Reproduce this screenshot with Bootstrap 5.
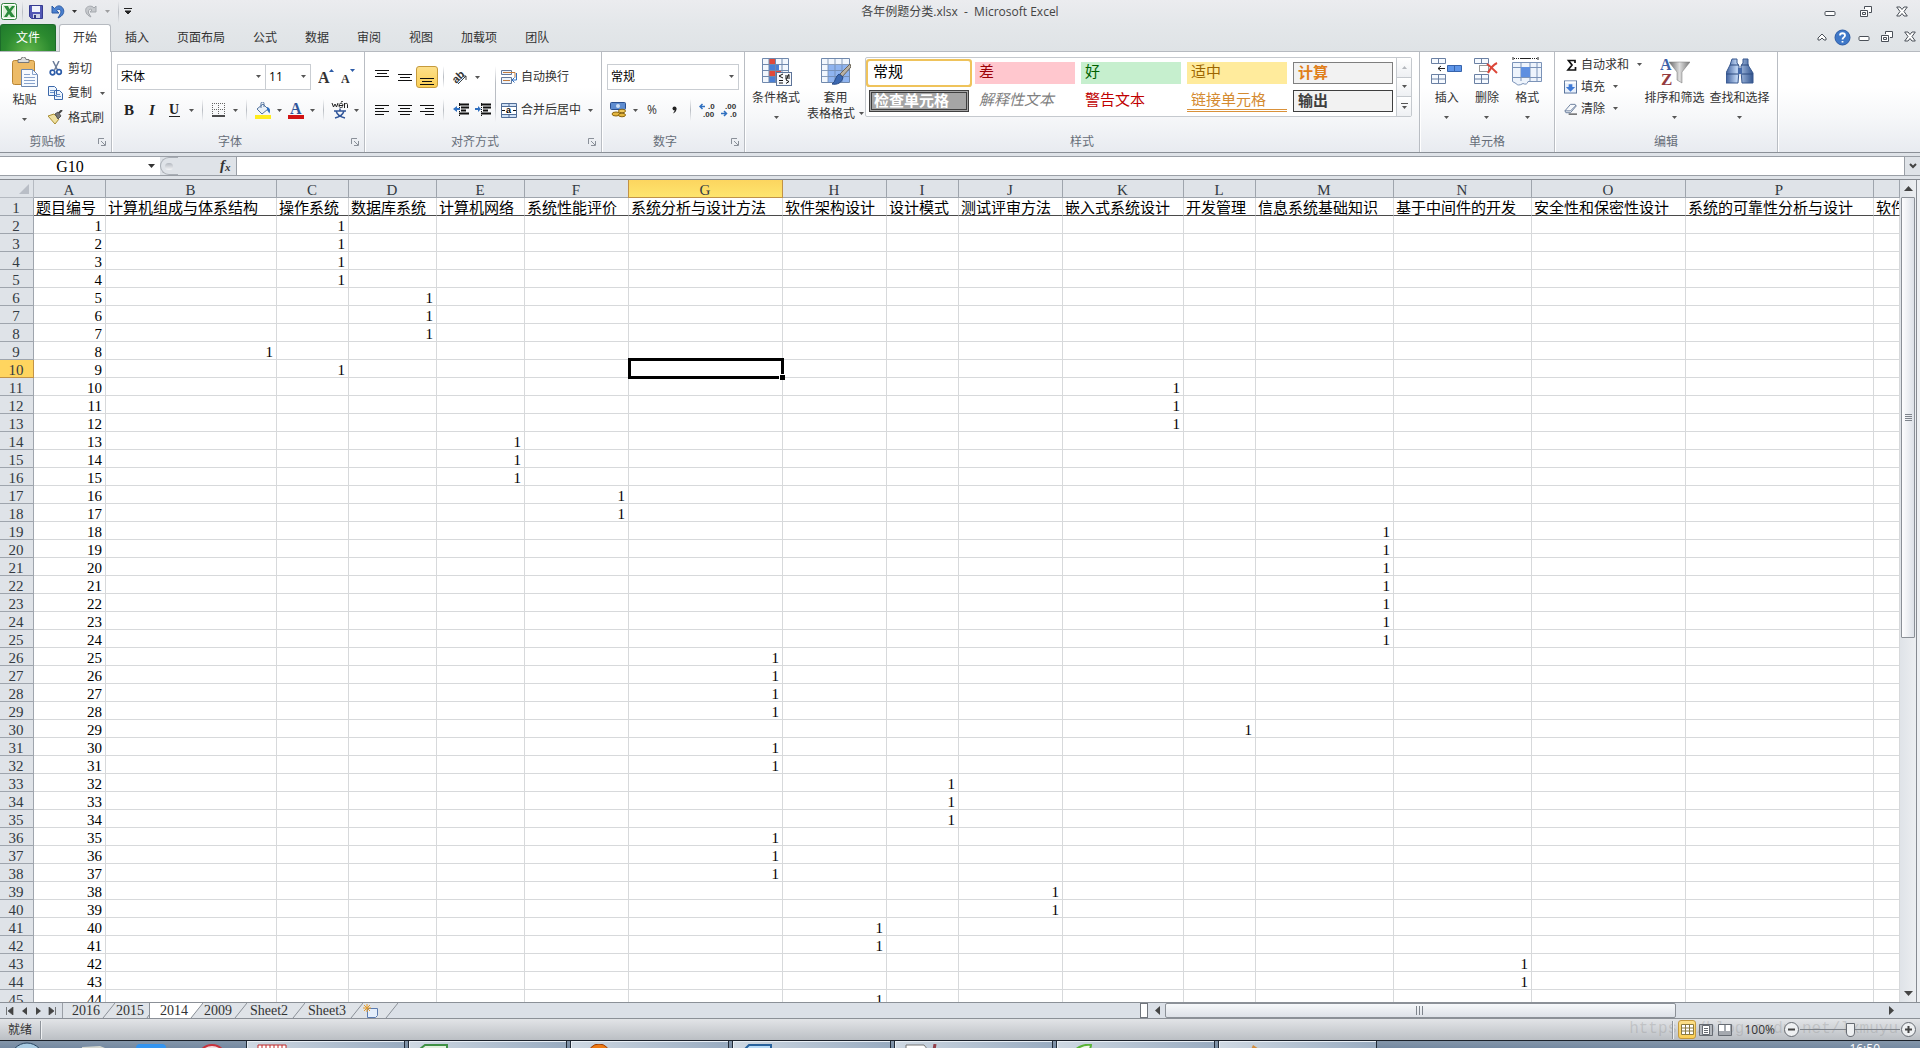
<!DOCTYPE html>
<html lang="zh-CN">
<head>
<meta charset="utf-8">
<meta name="viewport" content="width=device-width, initial-scale=1">
<title>各年例题分类.xlsx - Microsoft Excel</title>
<link href="https://cdn.jsdelivr.net/npm/bootstrap@5.3.0/dist/css/bootstrap.min.css" rel="stylesheet">
<style>
body{height:100vh;overflow:hidden;font:12px/16px "Open Sans","Noto Sans CJK SC",sans-serif;color:#333;background:#dfe3e8}
button{color:inherit}
svg{display:block;flex:none}
.rb{border:0;padding:0;background:none;font-size:12px;line-height:16px;border-radius:3px;display:flex;align-items:center;justify-content:center;white-space:nowrap;color:#333;flex:none}
.rb:hover{background:#fdeeb3}
.titlebar{height:24px;background:linear-gradient(#ebecef,#e4e7ea)}
.titlebar .doc-name{left:0;right:0;top:4px;pointer-events:none;color:#444}
.tabstrip{height:27px;background:linear-gradient(#e4e7ea,#dfe3e6)}
.tabstrip .nav-link{padding:0 14px;font-size:12px;line-height:27px;color:#333;border-radius:0}
.tabstrip .file-tab{width:56px;padding:0;color:#fff;text-align:center;background:radial-gradient(ellipse at 50% 100%,#5fb548,#2b8a2f 60%,#1f7a2c);border:1px solid #1c6b2a;border-bottom:0;border-radius:3px 3px 0 0;line-height:26px;margin-right:3px}
.tabstrip .current{background:#fff;border:1px solid #b6bac0;border-bottom:0;border-radius:3px 3px 0 0;padding:0 13px;height:28px;position:relative;z-index:2;line-height:26px}
.doc-ctl{gap:7px}
.ribbon{height:103px;border-top:1px solid #b6bac0;border-bottom:1px solid #8b9097;background:linear-gradient(#fff 35%,#f6f7f9 65%,#e8ebf0);position:relative}
.rgroup{border-right:1px solid #b9bdc3;box-shadow:1px 0 0 #fff;padding:5px 5px 1px;position:relative}
.rgroup .cap{height:18px;line-height:18px;color:#666d78;text-align:center}
.launch{right:5px;bottom:6px;width:8px;height:8px}
.g-clip{width:112px}.g-font{width:253px}.g-align{width:237px}.g-num{width:143px}.g-style{width:675px}.g-cell{width:135px}.g-edit{width:223px}
.trow{height:33px}
.trow-combo{padding-top:7px;margin-bottom:4px}
.align-body{padding-top:4px}
.w22{width:22px;height:22px}.w11{width:11px;height:22px}.w23{width:23px;height:22px}
.on{background:linear-gradient(#fde08a,#fbcf55);border:1px solid #c59a3c}
.vsep{width:11px;height:22px;background:linear-gradient(#0000,#b9bdc3,#0000) 50%/1px 100% no-repeat;flex:none}
.vtall{width:10px;height:56px;background:linear-gradient(#0000,#b9bdc3 30%,#b9bdc3 70%,#0000) 50%/1px 100% no-repeat}
.combo{height:26px;border:1px solid #c9cdd2;background:#fff}
.combo select{appearance:none;border:0;outline:0;background:none;padding:0 3px;font-size:12px;line-height:16px;color:#000;min-width:0}
.big{flex-direction:column;justify-content:flex-start;line-height:16px}
.big svg{margin-bottom:4px}
.big svg:last-child{margin-top:10px}
.big span svg:last-child{margin:0}
.cond{width:52px}.tablefmt{width:59px}
.small-list{height:69px}
.gallery{border:1px solid #c5c9ce;border-radius:2px;height:60px;background:#fff}
.gal-grid{display:grid;grid-template-columns:repeat(5,100px);grid-auto-rows:22px;gap:6px;padding:4px 3px 0 3px}
.sty{border:0;padding:0 4px;text-align:left;font:15px/17px "Noto Sans CJK SC",sans-serif;white-space:nowrap;background:#fff;display:flex;align-items:flex-start}
.s-normal{color:#000;box-shadow:0 0 0 1px #fff,0 0 0 3px #efc35b;border-radius:1px}
.s-bad{background:#ffc7ce;color:#9c0006}.s-good{background:#c6efce;color:#006100}.s-mid{background:#ffeb9c;color:#9c6500}
.s-calc{background:#f2f2f2;color:#e07f1a;border:1px solid #7f7f7f;font-weight:700}
.s-check{background:#a5a5a5;color:#fff;border:3px double #3f3f3f;font-weight:700;line-height:14px;padding:0 2px}
.s-exp{color:#7f7f7f;font-style:italic}.s-warn{color:#c00000}
.s-link{color:#d48a30;border-bottom:3px double #d9913a}
.s-out{background:#f2f2f2;color:#3f3f3f;border:1px solid #3f3f3f;font-weight:700}
.gal-nav{width:15px;border-left:1px solid #c5c9ce}
.gal-nav button{flex:1;border:0;border-bottom:1px solid #c5c9ce;border-radius:0;background:linear-gradient(#fff,#eef0f3)}
.gal-nav button:last-child{border-bottom:0}
.edit-list{width:80px;gap:6px}
.fxbar{height:20px;margin:3px 0;border-top:1px solid #9a9fa6;border-bottom:1px solid #9a9fa6;background:#fff}
.fxbar input{border:0;outline:0;background:none;padding:2px 0 0;font:16px/16px "Liberation Serif","Noto Sans CJK SC",serif;color:#000}
.namebox{width:160px}.namebox input{width:140px;text-align:center}
.fxtools{width:77px;background:#dfe3e8;border-right:1px solid #9a9fa6}
.fxknob{width:18px;height:18px;border:1px solid #a9aeb5;border-radius:9px 0 0 9px;border-right:0}
.fxknob i{display:block;width:8px;height:7px;border-radius:4px;margin:5px 4px;background:linear-gradient(#b4b9c0,#f4f5f7)}
.fxmore{width:16px;border-radius:0;border-left:1px solid #9a9fa6;background:#dfe3e8}
.sheet-area{border-top:1px solid #868a91;background:#fff;min-height:0}
.gridwrap{flex:1 1 0;overflow:hidden;min-width:0}
.cells{table-layout:fixed;width:100%;border-collapse:separate;border-spacing:0;font:15px/13px "Liberation Serif","Noto Sans CJK SC",serif;color:#000}
.cells th,.cells td{height:18px;padding:4px 3px 0 2px;border-right:1px solid #d7d9db;border-bottom:1px solid #d7d9db;white-space:nowrap;overflow:hidden;font-weight:400;text-align:right;position:relative}
.cells thead th,.cells tbody th{background:#dfe3e8;color:#333a42;text-align:center;border-color:#9fa5ad}
.cells thead th:first-child{border-color:#b5bac1}
.cells .top-row td{text-align:left;border-bottom-color:#4a4a4a;padding-right:0}
.cells thead .hot{background:linear-gradient(#fcd55f,#fee56e);border-color:#c19247;box-shadow:-1px 0 0 #c19247;overflow:visible}
.cells tbody .hot{background:#ffd55f;border-color:#c19247}
.cells .picked{overflow:visible}
.cursor{position:absolute;inset:-2px -2px -2px -1px;border:3px solid #000;z-index:2}
.cursor::after{content:"";position:absolute;right:-4px;bottom:-4px;width:6px;height:6px;background:#000;border:solid #fff;border-width:1px 0 0 1px}
.corner{position:absolute;right:4px;bottom:3px}
.vscroll{width:16px;flex:none;background:linear-gradient(90deg,#dfe3e8,#eceef1)}
.vscroll .track{flex:1}
.thumb-v{height:56%;margin:0 1px;border:1px solid #8b9097;background:linear-gradient(90deg,#fdfdfe,#dde1e8);border-radius:1px}
.edge{width:4px;flex:none;border-left:1px solid #868a91;background:#eef0f3}
.sheetbar{height:17px;border-top:1px solid #8b9097;border-bottom:1px solid #8b9097;background:#dbe0e7}
.navs{width:63px;padding:0 3px;border-right:1px solid #9a9fa6}
.navs .rb{width:14px}
.stab{border:0;padding:0;background:#dfe3e8;width:30px;font:14px/15px "Liberation Serif",serif;color:#333;text-align:center}
.stab.wide{width:44px}
.stab.live{background:#fff}
.first-gap{width:8px;background:#dfe3e8}
.hscroll{flex:0 0 40.6%}
.hs-end{width:22px}
.split{width:8px;margin:0 1px 0 0;border:1px solid #70757c;background:#fff}
.thumb-h{width:71%;border:1px solid #8b9097;border-radius:2px;background:linear-gradient(#f6f8fa,#dde1e8)}
.grip-h{width:9px;height:9px;background:repeating-linear-gradient(90deg,#7e848c 0 1px,#0000 1px 3px)}
.grip-v{width:7px;height:7px;background:repeating-linear-gradient(#7e848c 0 1px,#0000 1px 2px)}
.statusbar{height:21px;background:linear-gradient(#e2e4e7,#bbbfc4);position:relative}
.sdiv{width:2px;height:18px;border-left:1px solid #8f949b;background:#eef0f2}
.wmark{position:absolute;right:22px;top:1px;font:16px/18px "Liberation Mono",monospace;color:#7d7d7d40;pointer-events:none}
.zoom-tools{padding-right:3px}
.views{gap:1px;margin-right:2px}
.views .rb{width:18px;height:19px}
.zoomer{appearance:none;width:100px;height:19px;margin:0;background:linear-gradient(#7c8188,#7c8188) 50%/100% 1px no-repeat}
.zoomer::-webkit-slider-thumb{appearance:none;width:9px;height:14px;background:#eef0f2;border:1px solid #666b72;border-radius:1px 1px 5px 5px}
.taskbar{height:8px;overflow:hidden;border-top:1px solid #1a2029;background:linear-gradient(#8496aa,#7489a1)}
.tasks{padding-left:44px;gap:3px}
.task{width:159px;height:30px;border:1px solid #202a36;border-top:0;border-radius:0;padding:3px 10px;background:linear-gradient(90deg,#cfd9e3,#98abc0);box-shadow:inset 1px 1px 0 #e9eff5}
.launchers{width:202px}
.clock{color:#fff;font-size:12px;line-height:16px}
</style>
</head>
<body class="d-flex flex-column">

<svg width="0" height="0" class="position-absolute" aria-hidden="true">
<defs>
<linearGradient id="bino" x2="1" y2="0"><stop stop-color="#3d5f9c"/><stop offset=".4" stop-color="#bdd3f2"/><stop offset="1" stop-color="#33558f"/></linearGradient>
<linearGradient id="fun" x2="1" y2="0"><stop stop-color="#666"/><stop offset=".5" stop-color="#ddd"/><stop offset="1" stop-color="#777"/></linearGradient>
<symbol id="dn" viewBox="0 0 5 3"><path d="M0 0h5L2.500 3z" fill="#555"/></symbol>
<symbol id="dnk" viewBox="0 0 7 4"><path d="M0 0h7L3.500 4z" fill="#333"/></symbol>
<symbol id="min" viewBox="0 0 12 12"><rect x="1" y="5.500" width="10" height="4" rx="1" fill="#fff" stroke="#4a5058"/></symbol>
<symbol id="res" viewBox="0 0 12 12"><path d="M4.500 3V.500h7v6H9M.500 4.500h7v6h-7zM2.500 6.500h3v2h-3z" fill="#fff" stroke="#4a5058"/></symbol>
<symbol id="cls" viewBox="0 0 12 12"><path d="M.700 1h3.300l2 2.500L8 1h3.300L8 5.500l3.300 4.500H8L6 7.500 4 10H.700L4 5.500z" fill="#fff" stroke="#4a5058"/></symbol>
<symbol id="lau" viewBox="0 0 8 8"><path d="M.500 6V.500H6M7.500 3v4.500H3M3 3l4 4" fill="none" stroke="#8a9099"/></symbol>
<symbol id="al" viewBox="0 0 14 12"><path d="M0 .500h14M0 3.500h9M0 6.500h14M0 9.500h9" stroke="#111"/></symbol>
<symbol id="ac" viewBox="0 0 14 12"><path d="M0 .500h14M2 3.500h10M0 6.500h14M2 9.500h10" stroke="#111"/></symbol>
<symbol id="ar" viewBox="0 0 14 12"><path d="M0 .500h14M5 3.500h9M0 6.500h14M5 9.500h9" stroke="#111"/></symbol>
<symbol id="va" viewBox="0 0 14 7"><path d="M0 .500h14M2 3.500h10M0 6.500h14" stroke="#111"/></symbol>
</defs>
</svg>

<header class="titlebar d-flex align-items-center position-relative">
  <button class="rb" aria-label="Excel"><svg width="17" height="17"><rect x="1.500" y=".500" width="15" height="16" rx="2" fill="#fff" stroke="#2d7d3a"/><rect x="3" y="2" width="12" height="13" fill="#dcefd8"/><path d="M4 3h4l1.500 3L12 3h3l-4 5.500 4 5.500h-4l-2-3-2 3H4l3.500-5.500z" fill="#2c8b3c"/></svg></button>
  <span class="vsep"></span>
  <button class="rb me-2" aria-label="保存"><svg width="15" height="14"><path d="M1.500.500h13v13h-11l-2-2z" fill="#5157b5" stroke="#363b90"/><path d="M4 1h8v6H4z" fill="#f0f3fb"/><path d="M5 9h7v4H5z" fill="#cfd4e8"/><path d="M6 10h2v3H6z" fill="#333a80"/></svg></button>
  <button class="rb" aria-label="撤消"><svg width="14" height="14"><path d="M1 1v7h7L5.500 5.500C8 3 11 5 9.500 8.500L7 13c5-2 7-6 5-9.500S6 0 3.500 3.500z" fill="#4a80cf" stroke="#2c5ba5"/></svg></button>
  <button class="rb w11 ms-1" aria-label="撤消列表"><svg width="5" height="3"><use href="#dnk"/></svg></button>
  <button class="rb ms-1" aria-label="恢复"><svg width="14" height="14"><path d="M12 1v6H6l2-2C6 3 4 5 4.500 8L7 12C2 10 1 6 2 3.500S8 0 10 3z" fill="#c6c9cd" stroke="#a4a8ad"/></svg></button>
  <button class="rb w11 ms-1" aria-label="恢复列表"><svg width="5" height="3" opacity=".5"><use href="#dn"/></svg></button>
  <span class="vsep"></span>
  <button class="rb" aria-label="自定义快速访问工具栏"><svg width="8" height="7"><path d="M0 .500h8M1 3h6L4 6z" stroke="#222" fill="#222"/></svg></button>
  <div class="doc-name position-absolute text-center">各年例题分类.xlsx&nbsp; -&nbsp; Microsoft Excel</div>
  <div class="ms-auto d-flex align-items-center pe-2 me-1">
    <button class="rb me-4" aria-label="最小化"><svg width="12" height="12"><use href="#min"/></svg></button>
    <button class="rb me-4" aria-label="还原"><svg width="12" height="12"><use href="#res"/></svg></button>
    <button class="rb" aria-label="关闭"><svg width="12" height="12"><use href="#cls"/></svg></button>
  </div>
</header>

<nav class="tabstrip nav flex-nowrap">
  <a class="nav-link file-tab" href="#">文件</a>
  <a class="nav-link current" href="#">开始</a>
  <a class="nav-link" href="#">插入</a>
  <a class="nav-link" href="#">页面布局</a>
  <a class="nav-link" href="#">公式</a>
  <a class="nav-link" href="#">数据</a>
  <a class="nav-link" href="#">审阅</a>
  <a class="nav-link" href="#">视图</a>
  <a class="nav-link" href="#">加载项</a>
  <a class="nav-link" href="#">团队</a>
  <div class="doc-ctl ms-auto d-flex align-items-center pe-1">
    <button class="rb" aria-label="功能区最小化"><svg width="10" height="8"><path d="M1 5l4-4 4 4v2H7L5 5 3 7H1z" fill="#fff" stroke="#4a5058"/></svg></button>
    <button class="rb" aria-label="帮助"><svg width="17" height="17"><circle cx="8.500" cy="8.500" r="7.500" fill="#3f78c8" stroke="#2c5ba5"/><path d="M6 6.500c0-3 5-3 5 0 0 2-2.500 1.800-2.500 4M8.500 12v1.500" stroke="#fff" stroke-width="1.800" fill="none"/></svg></button>
    <button class="rb" aria-label="窗口最小化"><svg width="12" height="12"><use href="#min"/></svg></button>
    <button class="rb ms-1" aria-label="窗口还原"><svg width="12" height="12"><use href="#res"/></svg></button>
    <button class="rb ms-1" aria-label="关闭窗口"><svg width="12" height="12"><use href="#cls"/></svg></button>
  </div>
</nav>

<section class="ribbon d-flex">
  <div class="rgroup g-clip d-flex flex-column justify-content-between">
    <div class="d-flex">
      <button class="rb big me-1" style="width:39px"><svg width="27" height="31"><rect x="1.500" y="3.500" width="22" height="24" rx="2" fill="#edbb67" stroke="#b98532"/><path d="M7 5.500h11v-3h-3a2.500 2.500 0 0 0-5 0H7z" fill="#ddd" stroke="#777"/><path d="M10.500 12.500h11l5 5v12h-16z" fill="#f6faff" stroke="#6d87ae"/><path d="M21.500 12.500v5h5M13 17.500h6M13 20.500h11M13 23.500h11M13 26.500h11" stroke="#88a3cc" fill="none"/></svg>粘贴<svg width="5" height="3"><use href="#dn"/></svg></button>
      <div class="small-list d-flex flex-column justify-content-between align-items-start">
        <button class="rb gap-1 mt-1"><svg width="16" height="15"><path d="M5 0l4.500 9M11 0L6.500 9" stroke="#6b7c99" stroke-width="1.500"/><circle cx="4.500" cy="11.500" r="2.300" fill="none" stroke="#2d5ca8" stroke-width="1.700"/><circle cx="11" cy="11" r="2.300" fill="none" stroke="#2d5ca8" stroke-width="1.700"/></svg>剪切</button>
        <button class="rb gap-1"><svg width="16" height="14"><path d="M.500.500h6l2 2v7h-8zM6.500 4.500h5l3 3v6h-8z" fill="#eef5fd" stroke="#3c68aa"/><path d="M2 4.500h4M2 6.500h4M8 8.500h4M8 10.500h5" stroke="#6992cc"/></svg>复制<svg class="ms-1" width="5" height="3"><use href="#dn"/></svg></button>
        <button class="rb gap-1"><svg width="16" height="15"><path d="M0 6l6-2 5 5-4 5z" fill="#efe0a0" stroke="#a98e33"/><path d="M7 4l3-2 3 4-3 3z" fill="#777" stroke="#555"/><path d="M11 3l3-3" stroke="#444" stroke-width="2"/></svg>格式刷</button>
      </div>
    </div>
    <div class="cap me-3">剪贴板</div><svg class="launch position-absolute"><use href="#lau"/></svg>
  </div>

  <div class="rgroup g-font d-flex flex-column justify-content-between">
    <div>
      <div class="trow trow-combo d-flex align-items-center">
        <div class="combo d-flex align-items-center pe-1" style="width:153px"><select class="flex-fill" aria-label="字体"><option>宋体</option></select><svg width="5" height="3"><use href="#dn"/></svg></div>
        <div class="combo d-flex align-items-center pe-1 border-start-0" style="width:46px"><select class="flex-fill" aria-label="字号"><option>11</option></select><svg width="5" height="3"><use href="#dn"/></svg></div>
        <button class="rb w22 ms-1" aria-label="增大字号"><svg width="16" height="16"><text x="0" y="14" font-family="Liberation Serif" font-size="16" font-weight="700" fill="#333">A</text><path d="M11 3h5l-2.500-3z" fill="#2d5ca8"/></svg></button>
        <button class="rb w22" aria-label="减小字号"><svg width="14" height="16"><text x="0" y="14" font-family="Liberation Serif" font-size="12" font-weight="700" fill="#333">A</text><path d="M9 0h5l-2.500 3z" fill="#2d5ca8"/></svg></button>
      </div>
      <div class="trow d-flex align-items-center">
        <button class="rb w23" aria-label="加粗"><svg width="12" height="14"><text x="1" y="12" font-family="Liberation Serif" font-size="15" font-weight="700" fill="#222">B</text></svg></button>
        <button class="rb w23" aria-label="倾斜"><svg width="12" height="14"><text x="3" y="12" font-family="Liberation Serif" font-size="15" font-weight="700" font-style="italic" fill="#222">I</text></svg></button>
        <button class="rb w23" aria-label="下划线"><svg width="12" height="15"><text x="0" y="11" font-family="Liberation Serif" font-size="14" font-weight="700" fill="#222">U</text><path d="M0 13.500h11" stroke="#222"/></svg></button>
        <button class="rb w11" aria-label="下划线选项"><svg width="5" height="3"><use href="#dn"/></svg></button><span class="vsep"></span>
        <button class="rb w22" aria-label="边框"><svg width="14" height="14"><path d="M0 .500h13M0 6.500h13M.500 0v12M6.500 0v12M12.500 0v12" stroke="#666" stroke-dasharray="1 1"/><path d="M0 13h13" stroke="#111" stroke-width="1.500"/></svg></button>
        <button class="rb w11" aria-label="边框选项"><svg width="5" height="3"><use href="#dn"/></svg></button><span class="vsep"></span>
        <button class="rb w22" aria-label="填充颜色"><svg width="16" height="17"><path d="M2 7l6-5 5 5-6 5z" fill="#e9f0f8" stroke="#54749f"/><path d="M6 6V1.500a1.500 1.500 0 0 1 3 0V5" fill="none" stroke="#54749f"/><path d="M12 5c4 1 3 5 2.500 6.500L12 8z" fill="#2f6fc0"/><path d="M0 13h16v4H0z" fill="#ffec1f"/></svg></button>
        <button class="rb w11" aria-label="填充颜色选项"><svg width="5" height="3"><use href="#dn"/></svg></button>
        <button class="rb w22" aria-label="字体颜色"><svg width="16" height="17"><text x="2" y="12" font-family="Liberation Serif" font-size="16" font-weight="700" fill="#31569a">A</text><path d="M0 13h16v4H0z" fill="#d11313"/></svg></button>
        <button class="rb w11" aria-label="字体颜色选项"><svg width="5" height="3"><use href="#dn"/></svg></button><span class="vsep"></span>
        <button class="rb w22" aria-label="拼音"><svg width="18" height="18"><path d="M1 2l1.500 4L4 3l1.500 3L7 2M8 4.500h4C12 1.500 8 1.500 8 4.500s3 2 4 1M10 1l2-1M13.500 7V2m0 1.500c1-1.500 3-1.500 3 0V7" fill="none" stroke="#222"/><path d="M3 10h12M9 7.500V10M5 10c1 3.500 5 6 9 7M13 10c-1 3.500-5 6-9 7" fill="none" stroke="#31569a" stroke-width="1.500"/></svg></button>
        <button class="rb w11" aria-label="拼音选项"><svg width="5" height="3"><use href="#dn"/></svg></button>
      </div>
    </div>
    <div class="cap me-3">字体</div><svg class="launch position-absolute"><use href="#lau"/></svg>
  </div>

  <div class="rgroup g-align d-flex flex-column justify-content-between">
    <div class="align-body d-flex align-items-center">
      <div>
        <div class="trow d-flex align-items-center">
          <button class="rb w23" aria-label="顶端对齐"><svg width="14" height="14" viewBox="0 0 14 14"><use href="#va" width="14" height="7"/></svg></button>
          <button class="rb w23" aria-label="垂直居中"><svg width="14" height="7"><use href="#va"/></svg></button>
          <button class="rb w22 on pt-2" aria-label="底端对齐"><svg width="14" height="7"><use href="#va"/></svg></button>
          <span class="vsep"></span>
          <button class="rb w23" aria-label="方向"><svg width="17" height="16"><g transform="rotate(-45 7 8)"><text x="0" y="11" font-family="Liberation Sans" font-size="11" font-weight="700" fill="#333">ab</text></g><path d="M6 15l8-8m-4 0h4v4" stroke="#444" fill="none"/></svg></button>
          <button class="rb w11" aria-label="方向选项"><svg width="5" height="3"><use href="#dn"/></svg></button>
        </div>
        <div class="trow d-flex align-items-center">
          <button class="rb w23" aria-label="左对齐"><svg width="14" height="11" viewBox="0 0 14 11"><use href="#al" width="14" height="12"/></svg></button>
          <button class="rb w23" aria-label="居中"><svg width="14" height="11" viewBox="0 0 14 11"><use href="#ac" width="14" height="12"/></svg></button>
          <button class="rb w22" aria-label="右对齐"><svg width="14" height="11" viewBox="0 0 14 11"><use href="#ar" width="14" height="12"/></svg></button>
          <span class="vsep"></span>
          <button class="rb w23" aria-label="减少缩进量"><svg width="16" height="14"><path d="M6 1.500h10M8 4.500h8M8 7.500h5M6 10.500h10" stroke="#111" stroke-width="2"/><path d="M6.500 0v14" stroke="#111" stroke-dasharray="1 1"/><path d="M0 6l4-3v2h3v2H4v2z" fill="#2f6fc0"/></svg></button>
          <button class="rb w22" aria-label="增加缩进量"><svg width="16" height="14"><path d="M6 1.500h10M8 4.500h8M8 7.500h5M6 10.500h10" stroke="#111" stroke-width="2"/><path d="M6.500 0v14" stroke="#111" stroke-dasharray="1 1"/><path d="M6 6L3 3v2H0v2h3v2z" fill="#2f6fc0"/></svg></button>
        </div>
      </div>
      <span class="vtall"></span>
      <div class="ps-1">
        <div class="trow d-flex align-items-center"><button class="rb gap-1"><svg width="16" height="15"><path d="M.500.500h10v4H.500zM.500 7.500h10v6H.500z" fill="#eef4fb" stroke="#64789a"/><path d="M2 2.500h12v5M2 10.500h7" stroke="#c07a3e" fill="none"/><path d="M15.500 3v7h-4m2-2.500L11 10l2.500 2.500" fill="none" stroke="#2f6fc0"/></svg>自动换行</button></div>
        <div class="trow d-flex align-items-center"><button class="rb gap-1"><svg width="16" height="15"><path d="M.500.500h15v14H.500z" fill="#cfe0f5" stroke="#506d97"/><path d="M.500 3.500h15M.500 11.500h15M8 0v4M8 11v4" stroke="#506d97"/><path d="M1 4h14v7H1z" fill="#fff"/><text x="5" y="10" font-family="Liberation Sans" font-weight="700" font-size="9">a</text><path d="M1 7.500h3M12 7.500h3" stroke="#111"/></svg>合并后居中</button><button class="rb w11 ms-1" aria-label="合并选项"><svg width="5" height="3"><use href="#dn"/></svg></button></div>
      </div>
    </div>
    <div class="cap me-3">对齐方式</div><svg class="launch position-absolute"><use href="#lau"/></svg>
  </div>

  <div class="rgroup g-num d-flex flex-column justify-content-between">
    <div>
      <div class="trow trow-combo d-flex align-items-center">
        <div class="combo d-flex align-items-center pe-1 w-100"><select class="flex-fill" aria-label="数字格式"><option>常规</option></select><svg width="5" height="3"><use href="#dn"/></svg></div>
      </div>
      <div class="trow d-flex align-items-center">
        <button class="rb w23" aria-label="会计数字格式"><svg width="17" height="16"><rect x=".500" y=".500" width="15" height="7" rx="1" fill="#5e8cd0" stroke="#2a4f8f"/><circle cx="8" cy="4" r="2" fill="#cfe0f5"/><ellipse cx="6" cy="12" rx="4" ry="2" fill="#e4b63f" stroke="#8a6511"/><ellipse cx="12" cy="9" rx="3.500" ry="1.800" fill="#f0c95a" stroke="#8a6511"/><ellipse cx="12" cy="13" rx="3.500" ry="1.800" fill="#e4b63f" stroke="#8a6511"/></svg></button>
        <button class="rb w11" aria-label="会计选项"><svg width="5" height="3"><use href="#dn"/></svg></button>
        <button class="rb w22" aria-label="百分比">%</button>
        <button class="rb w22" aria-label="千位分隔"><svg width="5" height="8"><circle cx="2.500" cy="2.500" r="2" fill="#222"/><path d="M4.500 2.500C4.500 5 3 7 1 7.500L3 4z" fill="#222"/></svg></button>
        <span class="vsep"></span>
        <button class="rb w22" aria-label="增加小数位"><svg width="17" height="14"><text x="9" y="6" font-family="Liberation Sans" font-size="8" font-weight="700" fill="#333">.0</text><text x="4" y="14" font-family="Liberation Sans" font-size="8" font-weight="700" fill="#333">.00</text><path d="M1 3.500h5M3.500 1L1 3.500 3.500 6" stroke="#2f6fc0" fill="none" stroke-width="1.500"/></svg></button>
        <button class="rb w22" aria-label="减少小数位"><svg width="17" height="14"><text x="4" y="6" font-family="Liberation Sans" font-size="8" font-weight="700" fill="#333">.00</text><text x="9" y="14" font-family="Liberation Sans" font-size="8" font-weight="700" fill="#333">.0</text><path d="M0 10.500h5M3 8l2.500 2.500L3 13" stroke="#2f6fc0" fill="none" stroke-width="1.500"/></svg></button>
      </div>
    </div>
    <div class="cap me-3">数字</div><svg class="launch position-absolute"><use href="#lau"/></svg>
  </div>

  <div class="rgroup g-style d-flex flex-column justify-content-between">
    <div class="d-flex">
      <button class="rb big cond"><svg width="31" height="29"><path d="M1.500 1.500h26v24h-26z" fill="#f2f7fd" stroke="#7089ad"/><path d="M8 2h7v6H8zM8 14h12v5H8z" fill="#e0493a"/><path d="M8 8h10v6H8zM8 19h6v6H8z" fill="#4a7fd4"/><path d="M8 1v24M14.500 1v24M21 1v24M1 7.500h26M1 13.500h26M1 19.500h26" stroke="#7089ad"/><rect x="15.500" y="15.500" width="15" height="13" fill="#f7f9fc" stroke="#5d7499"/><path d="M22 17l-4 2 4 2M18 23.500h4M18 26h4M24 19h5M24 21h5M28 17l-3 6M25 23l3 1.500-3 2" fill="none" stroke="#111"/></svg>条件格式<svg width="5" height="3"><use href="#dn"/></svg></button>
      <button class="rb big tablefmt ms-1"><svg width="31" height="29"><path d="M1.500 1.500h28v24h-28z" fill="#f2f7fd" stroke="#7089ad"/><path d="M8 8h21v17H8z" fill="#8fb4f0"/><path d="M8 1v24M15 1v24M22 1v24M1 7.500h28M1 13.500h28M1 19.500h28" stroke="#7089ad" opacity=".8"/><path d="M30 7L20 17l2 3 9-10z" fill="#b9b2a5" stroke="#6d6658"/><path d="M19 17l4 3c-1 6-6 8-11 7 4-2 3-8 7-10z" fill="#3b68b1" stroke="#284b87"/></svg>套用<span class="d-flex align-items-center gap-1">表格格式<svg width="5" height="3"><use href="#dn"/></svg></span></button>
      <div class="gallery d-flex">
        <div class="gal-grid">
          <button class="sty s-normal">常规</button><button class="sty s-bad">差</button><button class="sty s-good">好</button><button class="sty s-mid">适中</button><button class="sty s-calc">计算</button>
          <button class="sty s-check">检查单元格</button><button class="sty s-exp">解释性文本</button><button class="sty s-warn">警告文本</button><button class="sty s-link">链接单元格</button><button class="sty s-out">输出</button>
        </div>
        <div class="gal-nav d-flex flex-column">
          <button class="rb" aria-label="上一行"><svg width="5" height="3"><path d="M0 3h5L2.500 0z" fill="#b4b8bd"/></svg></button>
          <button class="rb" aria-label="下一行"><svg width="5" height="3"><use href="#dn"/></svg></button>
          <button class="rb" aria-label="其他"><svg width="7" height="7"><path d="M0 .500h7" stroke="#555"/><path d="M1 3h5L3.500 6z" fill="#555"/></svg></button>
        </div>
      </div>
    </div>
    <div class="cap">样式</div>
  </div>

  <div class="rgroup g-cell d-flex flex-column justify-content-between">
    <div class="d-flex">
      <button class="rb big flex-fill"><svg width="31" height="29"><path d="M.500 1.500h14v5H.500zM7.500 1v5M.500 17.500h14v9H.500zM7.500 17v10M.500 22h14" fill="#f6faff" stroke="#6a80a3"/><path d="M16.500 8.500h14v6h-14z" fill="#5e95e8" stroke="#3764ad"/><path d="M23.500 8v6" stroke="#3764ad"/><path d="M14 11.500H7M10 9l-3 2.500 3 2.500" stroke="#222" fill="none"/></svg>插入<svg width="5" height="3"><use href="#dn"/></svg></button>
      <button class="rb big flex-fill"><svg width="25" height="29"><path d="M.500 1.500h14v5H.500zM7.500 1v5M.500 17.500h14v9H.500zM7.500 17v10M.500 22h14" fill="#f6faff" stroke="#6a80a3"/><path d="M5.500 8.500h9v6h-9z" stroke="#333" fill="none" stroke-dasharray="1 1"/><path d="M13 7c3 2 7 6 10 9M23 6c-4 2-7 6-9 10" stroke="#dc4638" stroke-width="2" fill="none"/></svg>删除<svg width="5" height="3"><use href="#dn"/></svg></button>
      <button class="rb big flex-fill"><svg width="31" height="29"><path d="M1 0v3M26 0v3M8 1.500h11" stroke="#222"/><path d="M2 1.500h24" stroke="#222" stroke-dasharray="1 1"/><path d="M.500 5.500h29v19H16q-1 4-5 2-5 3-7 0l-3.500-2z" fill="#eef4fc" stroke="#7b93b8"/><path d="M9 5v19M18 5v19M25 5v19M.500 10.500h29M.500 20.500h29" stroke="#7b93b8"/><path d="M9 10h9v10H9z" fill="#5e8fe0"/></svg>格式<svg width="5" height="3"><use href="#dn"/></svg></button>
    </div>
    <div class="cap">单元格</div>
  </div>

  <div class="rgroup g-edit d-flex flex-column justify-content-between">
    <div class="d-flex ps-1">
      <div class="edit-list d-flex flex-column align-items-start">
        <button class="rb gap-1"><svg width="13" height="14"><path d="M11 5V2.500H4.500l3.500 4.500-4 5h7.500V9" fill="none" stroke="#111" stroke-width="1.700"/></svg>自动求和<svg class="ms-1" width="5" height="3"><use href="#dn"/></svg></button>
        <button class="rb gap-1"><svg width="13" height="14" viewBox="0 0 14 14"><rect x=".500" y=".500" width="13" height="13" fill="#e8f0fb" stroke="#506d97"/><path d="M1 1h12v2H1z" fill="#fff"/><path d="M5 4h4v3h3l-5 5-5-5h3z" fill="#3f7ad6"/></svg>填充<svg class="ms-1" width="5" height="3"><use href="#dn"/></svg></button>
        <button class="rb gap-1"><svg width="13" height="14" viewBox="0 0 14 14"><path d="M1 9l6-7h5l1 2-6 7H2z" fill="#f6f8fb" stroke="#667a99"/><path d="M1 9h6l6-6" fill="none" stroke="#667a99"/><path d="M5 12.500h9" stroke="#111"/></svg>清除<svg class="ms-1" width="5" height="3"><use href="#dn"/></svg></button>
      </div>
      <button class="rb big" style="width:65px"><svg width="30" height="29"><text x="0" y="13" font-family="Liberation Serif" font-weight="700" font-size="16" fill="#3d62a8">A</text><text x="1" y="28" font-family="Liberation Serif" font-weight="700" font-size="17" fill="#943c3f">Z</text><path d="M9 5h21l-8 10v11l-5-3v-8z" fill="url(#fun)" stroke="#777" stroke-width=".500"/></svg>排序和筛选<svg width="5" height="3"><use href="#dn"/></svg></button>
      <button class="rb big" style="width:65px"><svg width="28" height="29"><path d="M6 2h5v4l2 3v5l-1 12H0V16l4-8zM17 2h5v6l5 8v10H16l-1-12V9l2-3z" fill="url(#bino)" stroke="#39598f"/><path d="M0 17h12M16 17h11M4 8h9M15 8h8" stroke="#2f4c80"/><path d="M12 11h4v6h-4z" fill="#466aa8"/></svg>查找和选择<svg width="5" height="3"><use href="#dn"/></svg></button>
    </div>
    <div class="cap">编辑</div>
  </div>
</section>

<div class="fxbar d-flex">
  <div class="namebox d-flex align-items-center"><input type="text" value="G10" aria-label="名称框"><svg class="ms-2" width="7" height="4"><use href="#dnk"/></svg></div>
  <div class="fxtools d-flex align-items-center justify-content-between pe-1"><span class="fxknob"><i></i></span>
    <button class="rb" aria-label="插入函数"><svg width="14" height="16"><text x="2" y="12" font-family="Liberation Serif" font-style="italic" font-weight="700" font-size="15" fill="#333">f</text><text x="7" y="13" font-family="Liberation Serif" font-style="italic" font-weight="700" font-size="11" fill="#333">x</text></svg></button></div>
  <input type="text" class="flex-fill" aria-label="编辑栏">
  <button class="rb fxmore" aria-label="展开编辑栏"><svg width="8" height="6"><path d="M1 1l3 3 3-3" stroke="#444" stroke-width="2" fill="none"/></svg></button>
</div>

<main class="sheet-area d-flex flex-fill">
  <div class="gridwrap">
    <table class="cells">
      <colgroup id="cols"></colgroup>
      <thead><tr id="letters"></tr></thead>
      <tbody id="rows"></tbody>
    </table>
  </div>
  <div class="vscroll d-flex flex-column">
    <button class="rb w-100" style="height:17px" aria-label="向上滚动"><svg width="9" height="5"><path d="M0 5h9L4.500 0z" fill="#444"/></svg></button>
    <div class="track"><div class="thumb-v d-flex align-items-center justify-content-center"><span class="grip-v"></span></div></div>
    <button class="rb w-100" style="height:17px" aria-label="向下滚动"><svg width="9" height="5"><path d="M0 0h9L4.500 5z" fill="#444"/></svg></button>
  </div>
  <div class="edge"></div>
</main>

<div class="sheetbar d-flex">
  <div class="navs d-flex">
    <button class="rb" aria-label="第一张"><svg width="8" height="8"><path d="M.500 0v8M7 0v8L2 4z" stroke="#444" fill="#444" stroke-width=".700"/></svg></button>
    <button class="rb" aria-label="上一张"><svg width="5" height="8"><path d="M5 0v8L0 4z" fill="#444"/></svg></button>
    <button class="rb" aria-label="下一张"><svg width="5" height="8"><path d="M0 0v8l5-4z" fill="#444"/></svg></button>
    <button class="rb" aria-label="最后一张"><svg width="8" height="8"><path d="M7.500 0v8M1 0v8l5-4z" stroke="#444" fill="#444" stroke-width=".700"/></svg></button>
  </div>
  <span class="first-gap"></span>
  <div class="d-flex flex-fill" id="tabs"></div>
  <div class="hscroll d-flex align-items-stretch">
    <span class="split"></span>
    <button class="rb" style="width:16px" aria-label="向左滚动"><svg width="5" height="9"><path d="M5 0v9L0 4.500z" fill="#444"/></svg></button>
    <div class="flex-fill d-flex"><div class="thumb-h d-flex align-items-center justify-content-center"><span class="grip-h"></span></div></div>
    <button class="rb" style="width:14px" aria-label="向右滚动"><svg width="5" height="9"><path d="M0 0v9l5-4.500z" fill="#444"/></svg></button>
    <span class="hs-end"></span>
  </div>
</div>

<footer class="statusbar d-flex align-items-center">
  <span class="ps-2 pe-2">就绪</span><span class="sdiv"></span>
  <span class="wmark">https://blog.csdn.net/lxmuyu</span>
  <div class="zoom-tools ms-auto d-flex align-items-center position-relative">
    <span class="sdiv me-1"></span>
    <div class="views d-flex">
      <button class="rb on" aria-label="普通"><svg width="13" height="11"><path d="M.500.500h12v10H.500zM.500 4h12M.500 7h12M4.500 0v10M8.500 0v10" fill="#fff" stroke="#8a7a40"/></svg></button>
      <button class="rb" aria-label="页面布局"><svg width="14" height="12"><path d="M.500.500h13v11H.500z" fill="#b5b9be" stroke="#666b72"/><path d="M3.500 1.500h7v9h-7zM5 4.500h4M5 6.500h4M5 8.500h4" fill="#fff" stroke="#666b72"/></svg></button>
      <button class="rb" aria-label="分页预览"><svg width="14" height="12"><path d="M.500.500h13v11H.500z" fill="#a5a9af" stroke="#666b72"/><path d="M1 1h5v6H1zM8 1h4v6H8z" fill="#fff"/></svg></button>
    </div>
    <label for="zoom" class="px-2">100%</label>
    <button class="rb" aria-label="缩小"><svg width="17" height="17"><circle cx="8.500" cy="8.500" r="7" fill="#eef0f2" stroke="#666b72"/><path d="M5 8.500h7" stroke="#444" stroke-width="2"/></svg></button>
    <input id="zoom" type="range" class="zoomer" min="0" max="100" value="50">
    <button class="rb" aria-label="放大"><svg width="17" height="17"><circle cx="8.500" cy="8.500" r="7" fill="#eef0f2" stroke="#666b72"/><path d="M5 8.500h7M8.500 5v7" stroke="#444" stroke-width="2"/></svg></button>
  </div>
</footer>

<div class="taskbar d-flex align-items-start">
  <div class="launchers d-flex"><svg width="230" height="30"><ellipse cx="27" cy="20" rx="17" ry="18" fill="#a9cbe2" stroke="#24405c"/><path d="M82 6l18-1 10 4v20H82z" fill="#d3d6cf"/><rect x="136" y="3" width="30" height="26" rx="4" fill="#3294f0"/><circle cx="212" cy="18" r="14" fill="#f4dfe2" stroke="#c8323c" stroke-width="2"/></svg></div>
  <div class="tasks d-flex">
    <button class="task" aria-label="任务 1"><svg width="30" height="24"><path d="M1 1h28v22H1zM1 5h28M5 1v20M9 1v20M13 1v20M17 1v20M21 1v20M25 1v20" fill="#fff" stroke="#c02a2a"/></svg></button>
    <button class="task" aria-label="任务 2"><svg width="30" height="24"><path d="M1 5l5-4h22v22H1z" fill="#e3f1df" stroke="#3f9145" stroke-width="2"/></svg></button>
    <button class="task" aria-label="任务 3"><svg width="30" height="24"><circle cx="18" cy="11" r="11" fill="#ef7a12" stroke="#9b3d06"/></svg></button>
    <button class="task" aria-label="任务 4"><svg width="30" height="24"><path d="M1 6l5-5h22v22H1z" fill="#b9dcf8" stroke="#28629d" stroke-width="2"/></svg></button>
    <button class="task" aria-label="任务 5"><svg width="34" height="24"><path d="M1 1h18l4 5v17H1z" fill="#fff" stroke="#777"/><path d="M30 0l-2 12" stroke="#93404a" stroke-width="3"/></svg></button>
    <button class="task" aria-label="任务 6"><svg width="30" height="24"><path d="M4 14C6 3 18 0 24 1c-1 8-8 14-20 13z" fill="#f1f7ec" stroke="#59b436" stroke-width="2"/></svg></button>
    <button class="task" aria-label="任务 7"><svg width="34" height="24"><path d="M24 1l6 4-4 12-8-2z" fill="#d58e3d"/></svg></button>
  </div>
  <span class="clock ms-auto me-4 pe-3">16:50</span>
</div>

<script>
// Column letter, width in pixels (0 takes the rest), heading in row 1
const columns = [
  ['A',72,'题目编号'],['B',171,'计算机组成与体系结构'],['C',72,'操作系统'],['D',88,'数据库系统'],
  ['E',88,'计算机网络'],['F',104,'系统性能评价'],['G',154,'系统分析与设计方法'],['H',104,'软件架构设计'],
  ['I',72,'设计模式'],['J',104,'测试评审方法'],['K',121,'嵌入式系统设计'],['L',72,'开发管理'],
  ['M',138,'信息系统基础知识'],['N',138,'基于中间件的开发'],['O',154,'安全性和保密性设计'],
  ['P',188,'系统的可靠性分析与设计'],['',0,'软件']
];
// Category column of each question, 1 to 44
const marks = 'CCCCDDDBCKKKEEEFFMMMMMMMGGGGLGGIIIGGGJJHHNNH';

document.getElementById('cols').innerHTML = '<col style="width:34px">' +
  columns.map(c => c[1] ? `<col style="width:${c[1]}px">` : '<col>').join('');
document.getElementById('letters').innerHTML =
  '<th><svg class="corner" width="10" height="10"><path d="M10 0v10H0z" fill="#b9bec6"/></svg></th>' +
  columns.map(c => `<th${c[0] === 'G' ? ' class="hot"' : ''}>${c[0]}</th>`).join('');
let html = '<tr class="top-row"><th>1</th>' + columns.map(c => `<td>${c[2]}</td>`).join('') + '</tr>';
[...marks].forEach((m, i) => {
  html += `<tr><th${i === 8 ? ' class="hot"' : ''}>${i + 2}</th>` + columns.map(c => {
    if (c[0] === 'A') return `<td>${i + 1}</td>`;
    if (c[0] === 'G' && i === 8) return '<td class="picked"><span class="cursor"></span></td>';
    return `<td>${c[0] === m ? 1 : ''}</td>`;
  }).join('') + '</tr>';
});
document.getElementById('rows').innerHTML = html;

const sheets = ['2016','2015','2014','2009','Sheet2','Sheet3'];
const slash = (l, r) => `<svg width="14" height="15"><path d="M0 0H14L2 15H0z" fill="${l}"/><path d="M14 0v15H2z" fill="${r}"/><path d="M14 0L2 15" stroke="#8b9097"/></svg>`;
const wall = '<svg width="14" height="15"><path d="M0 0h4v15H0z" fill="#dfe3e8"/><path d="M4 0h10v15H4z" fill="#fff"/><path d="M4.500 0v15M2 15l2-3" stroke="#8b9097"/></svg>';
document.getElementById('tabs').innerHTML = sheets.map((s, i) =>
  `<button class="stab${s.length > 4 ? ' wide' : ''}${i === 2 ? ' live' : ''}">${s}</button>` +
  (i === 1 ? wall : slash(i === 2 ? '#fff' : '#dfe3e8', '#dfe3e8'))).join('') +
  '<button class="stab" style="width:21px" aria-label="插入工作表"><svg width="16" height="14"><path d="M4.500 4.500h10v7l-2 2h-8z" fill="#e4eefb" stroke="#5c7cb0"/><path d="M4 0v8M0 4h8M1 1l6 6M7 1L1 7" stroke="#e39a2a"/></svg></button>' + slash('#dfe3e8', '#dbe0e7');
</script>
<script src="https://cdn.jsdelivr.net/npm/bootstrap@5.3.0/dist/js/bootstrap.bundle.min.js"></script>
</body>
</html>
